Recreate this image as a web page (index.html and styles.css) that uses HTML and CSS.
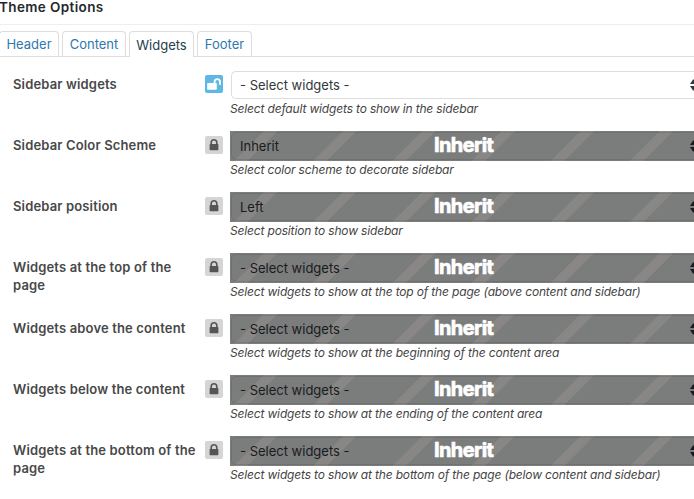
FILE: index.html
```html
<!DOCTYPE html>
<html lang="en">
<head>
<meta charset="utf-8">
<title>Theme Options</title>
<link rel="stylesheet" href="styles.css">
</head>
<body>
<svg class="defs" width="0" height="0">
  <symbol id="lock" viewBox="0 0 18 18"><rect x="4.6" y="8" width="8.8" height="6.3" rx=".7" fill="currentColor"/><path d="M6.2 8.5V6.6a2.8 2.8 0 0 1 5.6 0v1.9" fill="none" stroke="currentColor" stroke-width="1.6"/></symbol>
  <symbol id="unlock" viewBox="0 0 18 18"><rect x="2.2" y="8" width="9.6" height="6.7" rx=".7" fill="currentColor"/><path d="M9.6 8.5V6.8a2.7 2.7 0 0 1 5.4 0v2.4" fill="none" stroke="currentColor" stroke-width="1.8" stroke-linecap="round"/></symbol>
  <symbol id="arrows" viewBox="0 0 8 12"><path d="M0 5 3 .5h2L8 5zM0 7h8l-3 4.500H3z" fill="currentColor"/></symbol>
</svg>
<h2 class="title">Theme Options</h2>
<nav class="tabs">
  <a class="tab tab-header">Header</a>
  <a class="tab tab-content">Content</a>
  <a class="tab tab-widgets active">Widgets</a>
  <a class="tab tab-footer">Footer</a>
</nav>
<main class="options">
  <section class="row">
    <h3 class="label">Sidebar widgets</h3>
    <span class="toggle open"><svg><use href="#unlock"/></svg></span>
    <div class="field"><div class="box"><div class="select">- Select widgets -<svg class="arrows"><use href="#arrows"/></svg></div></div><p class="hint">Select default widgets to show in the sidebar</p></div>
  </section>
  <section class="row">
    <h3 class="label">Sidebar Color Scheme</h3>
    <span class="toggle"><svg><use href="#lock"/></svg></span>
    <div class="field"><div class="box locked"><div class="select">Inherit<svg class="arrows"><use href="#arrows"/></svg></div><span class="cover">Inherit</span></div><p class="hint">Select color scheme to decorate sidebar</p></div>
  </section>
  <section class="row">
    <h3 class="label">Sidebar position</h3>
    <span class="toggle"><svg><use href="#lock"/></svg></span>
    <div class="field"><div class="box locked"><div class="select">Left<svg class="arrows"><use href="#arrows"/></svg></div><span class="cover">Inherit</span></div><p class="hint">Select position to show sidebar</p></div>
  </section>
  <section class="row">
    <h3 class="label">Widgets at the top of the page</h3>
    <span class="toggle"><svg><use href="#lock"/></svg></span>
    <div class="field"><div class="box locked"><div class="select">- Select widgets -<svg class="arrows"><use href="#arrows"/></svg></div><span class="cover">Inherit</span></div><p class="hint">Select widgets to show at the top of the page (above content and sidebar)</p></div>
  </section>
  <section class="row">
    <h3 class="label">Widgets above the content</h3>
    <span class="toggle"><svg><use href="#lock"/></svg></span>
    <div class="field"><div class="box locked"><div class="select">- Select widgets -<svg class="arrows"><use href="#arrows"/></svg></div><span class="cover">Inherit</span></div><p class="hint">Select widgets to show at the beginning of the content area</p></div>
  </section>
  <section class="row">
    <h3 class="label">Widgets below the content</h3>
    <span class="toggle"><svg><use href="#lock"/></svg></span>
    <div class="field"><div class="box locked"><div class="select">- Select widgets -<svg class="arrows"><use href="#arrows"/></svg></div><span class="cover">Inherit</span></div><p class="hint">Select widgets to show at the ending of the content area</p></div>
  </section>
  <section class="row">
    <h3 class="label">Widgets at the bottom of the page</h3>
    <span class="toggle"><svg><use href="#lock"/></svg></span>
    <div class="field"><div class="box locked"><div class="select">- Select widgets -<svg class="arrows"><use href="#arrows"/></svg></div><span class="cover">Inherit</span></div><p class="hint">Select widgets to show at the bottom of the page (below content and sidebar)</p></div>
  </section>
</main>
</body>
</html>
```
FILE: styles.css
```css
* { box-sizing: border-box; }
body {
  margin: 0;
  height: 499px;
  overflow: hidden;
  background: #fff;
  color: #444;
  font: 13px/18px Inter, "Liberation Sans", sans-serif;
}
.defs { display: block; }
.title {
  margin: 0 0 0 -1px;
  height: 25px;
  line-height: 15px;
  border-bottom: 1px solid #eee;
  color: #23282d;
  font-size: 13.5px;
  font-weight: 600;
  letter-spacing: .38px;
}
.tabs {
  display: flex;
  gap: 3px;
  height: 32px;
  padding-top: 6px;
  border-bottom: 1px solid #ddd;
}
.tab {
  height: 25px;
  border: 1px solid #ddd;
  border-bottom: 0;
  border-radius: 4px 4px 0 0;
  color: #2e78ad;
  line-height: 25px;
  text-align: center;
}
.tab-header { width: 60px; margin-left: -1px; }
.tab-content { width: 64px; }
.tab-widgets { width: 65px; }
.tab-footer { width: 55px; }
.tab.active {
  height: 26px;
  background: #fff;
  color: #23404e;
  line-height: 27px;
}
.options { padding: 13px 0 0 13px; }
.row {
  display: flex;
  align-items: flex-start;
  height: 61px;
}
.label {
  flex: none;
  width: 192px;
  margin: 0;
  padding: 5px 4px 0 0;
  color: #484848;
  font-size: 13px;
  font-weight: 600;
  letter-spacing: .15px;
  line-height: 18px;
}
.toggle {
  flex: none;
  width: 18px;
  height: 18px;
  margin-top: 5px;
  border-radius: 2px;
  background: #d5d5d5;
  color: #555;
}
.toggle.open { background: #5fb7e5; color: #fff; }
.toggle svg { display: block; width: 18px; height: 18px; }
.field {
  flex: none;
  width: 464px;
  margin-left: 7px;
}
.box {
  position: relative;
  height: 30px;
  padding: 1px 0 1px 1px;
}
.select {
  position: relative;
  height: 28px;
  padding-left: 8px;
  border: 1px solid #ddd;
  border-right: 0;
  border-radius: 5px 0 0 5px;
  color: #32373c;
  line-height: 27px;
}
.arrows {
  position: absolute;
  top: 7px;
  right: -4px;
  width: 8px;
  height: 12px;
}
.locked {
  background: repeating-linear-gradient(135deg, #7b7d7c 0 23.7px, #888786 24.3px 33.2px, #7b7d7c 33.8px 56px);
}
.locked .select { border-color: rgba(0, 0, 0, .09); color: #191b1e; }
.cover {
  position: absolute;
  top: 0;
  left: 204px;
  color: #fff;
  font-size: 20px;
  font-weight: 700;
  letter-spacing: -.6px;
  line-height: 28px;
  -webkit-text-stroke: .7px #fff;
}
.hint {
  margin: 0;
  color: #444;
  font-size: 12px;
  font-style: italic;
  letter-spacing: -.16px;
  line-height: 18px;
  white-space: nowrap;
}
```
